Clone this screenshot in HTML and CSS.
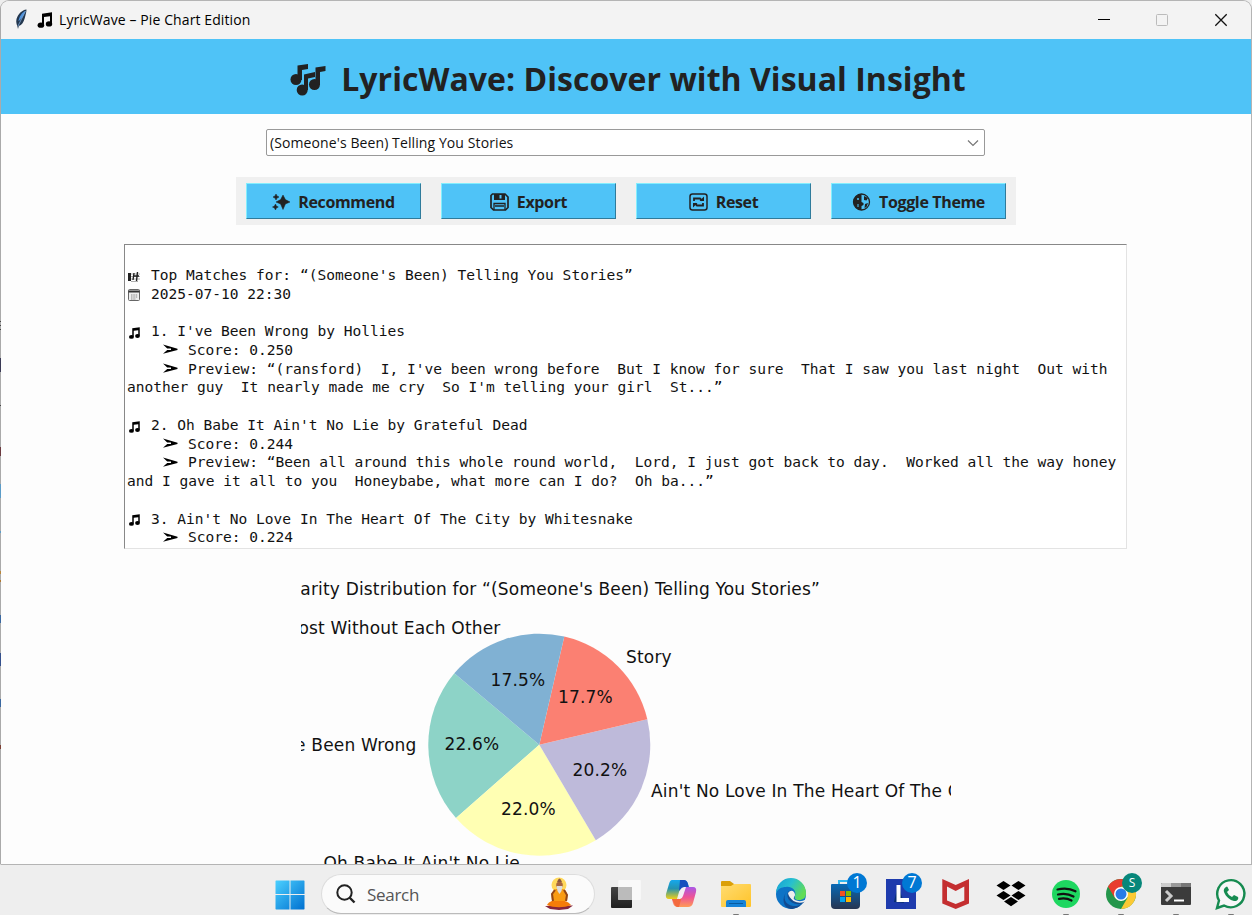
FILE: index.html
```html
<!DOCTYPE html>
<html lang="en">
<head>
<meta charset="utf-8">
<title>LyricWave – Pie Chart Edition</title>
<link rel="stylesheet" href="styles.css">
</head>
<body>
<svg class="defs" width="0" height="0">
  <defs>
    <symbol id="note" viewBox="0 0 16 16"><path d="M5 1.800 15 .2V11.500h-2V4.200L7 5.100v8H5z"/><ellipse cx="3.900" cy="13.200" rx="3.300" ry="2.600"/><ellipse cx="12" cy="11.900" rx="3.200" ry="2.600"/></symbol>
    <symbol id="arrow" viewBox="0 0 16 10"><path d="M1 .5 15.500 4.700v1.200L1 9.800 5.200 6.100H9V4.500H5.200z"/></symbol>
  </defs>
</svg>
<div class="window">
  <div class="titlebar">
    <svg class="feather" width="14" height="21" viewBox="0 0 14 21"><path d="M12.500.5C8 1 4 5 2.500 10c-.7 3 .2 5.500.8 7l.7 3 .8-3c3-1 5-4 6-8C11.500 6 12.500 3 12.500.5z" fill="#23374f"/><path d="M11.500 2C8 3 5 8 4.500 12 7 11 10 6 11.500 2z" fill="#4f94df"/><path d="M11.500 2 4 17" stroke="#7da7d6" stroke-width=".8"/></svg>
    <svg class="title-note" width="16" height="16"><use href="#note"/></svg>
    <span class="caption">LyricWave – Pie Chart Edition</span>
    <svg class="controls" width="140" height="20" viewBox="0 0 140 20" fill="none"><path d="M8 9.500h12" stroke="#000"/><rect x="66.500" y="4.500" width="11" height="11" rx="1" stroke="#bbb"/><path d="m125.300 4.300 11.400 11.400m0-11.400-11.400 11.400" stroke="#111" stroke-width="1.300"/></svg>
  </div>
  <header class="banner">
    <svg width="36" height="34" viewBox="0 0 36 34" fill="#222"><circle cx="6" cy="16.500" r="5.500"/><path d="M7.500 2.500 18 1v5l-6 1v10H7.500z"/><circle cx="12.200" cy="27" r="5.500"/><path d="M14 11.500 25 9v5l-7 1.500V27h-4z"/><circle cx="24.500" cy="21.500" r="5.500"/><path d="m25.500 4.500 10-1.500v5l-5.500 1v13h-4.500z"/></svg>
    <h1>LyricWave: Discover with Visual Insight</h1>
  </header>
  <div class="combo"><span>(Someone's Been) Telling You Stories</span><svg width="12" height="8" viewBox="0 0 12 8" fill="none" stroke="#777" stroke-width="1.200"><path d="m1 1.500 5 5 5-5"/></svg></div>
  <div class="actions">
    <button class="recommend"><svg width="18" height="18" viewBox="0 0 18 18" fill="#222"><path d="m11 2 2.400 4.600L18 9l-4.600 2L11 16.500 8.600 11 4 9l4.600-2.400zM4 1l1 2 2 1-2 1-1 2-1-2-2-1 2-1zM3.500 11l.8 2 2 1-2 1-.8 2-1-2-2-1 2-1z" stroke="#222" stroke-width=".5"/></svg><span>Recommend</span></button>
    <button class="export"><svg width="19" height="18" viewBox="0 0 19 18"><path d="M2.500 1h12.500l3 3v10.500L15.500 17h-12L1 14.500V2.500z" fill="none" stroke="#222" stroke-width="1.700"/><path d="M4 1h11v6H4z" fill="#222"/><path d="M9.500 2h2v3.500h-2z" fill="#4fc3f7"/><path d="M4 17v-6.500h11V17M5 13h9" fill="none" stroke="#222" stroke-width="1.300"/></svg><span>Export</span></button>
    <button class="reset"><svg width="19" height="18" viewBox="0 0 19 18" fill="none" stroke="#222"><rect x="1" y="1" width="17" height="16" rx="2.500" stroke-width="1.500"/><path d="M5 8V5.500h6l2 2M14 10v2.500H8l-2-2" stroke-width="1.800"/><path d="M10.500 8h4.500V3.500zM8.500 10H4v4.500z" fill="#222" stroke="none"/></svg><span>Reset</span></button>
    <button class="theme"><svg width="19" height="18" viewBox="0 0 19 18"><circle cx="9.500" cy="9" r="8" fill="none" stroke="#222" stroke-width="1.300"/><path d="M9.500 1a8 8 0 0 0 0 16v-4l2-1v-2l-2-1z" fill="#222"/><path d="m12 3 4 2-1.500 2.500L12 7zM13 11l3-1-1.500 4-2 1z" fill="#222"/><circle cx="6" cy="6" r="1" fill="#4fc3f7"/><path d="M6 11v3" stroke="#4fc3f7"/></svg><span>Toggle Theme</span></button>
  </div>
  <div class="results">
    <p class="line"></p>
    <p class="line"><svg class="ico" width="15" height="12" viewBox="0 0 15 12" stroke="#222"><path d="M2.500 2v8" stroke-width="3"/><path d="M4 3h9M4 5.500h9M4 8h9M4 10.500h7" stroke="#999" stroke-width=".8"/><path d="m7 2-1 7M10.500 1l-1 9M6 5h6" stroke-width="1.400"/></svg>Top Matches for: “(Someone's Been) Telling You Stories”</p>
    <p class="line"><svg class="ico" width="15" height="12" viewBox="0 0 15 12"><rect x="1.500" y=".5" width="11" height="11" rx="1" fill="#eee" stroke="#666"/><path d="M1.500 1.500h11v2h-11z" fill="#333"/><path d="M4 6h7M4 8h7M4 10h5" stroke="#888" stroke-dasharray="1.500 .8"/></svg>2025-07-10 22:30</p>
    <p class="line"></p>
    <p class="line"><svg class="ico" width="15" height="12"><use href="#note"/></svg>1. I've Been Wrong by Hollies</p>
    <p class="line detail"><svg class="arrow" width="16" height="10"><use href="#arrow"/></svg>Score: 0.250</p>
    <p class="line detail"><svg class="arrow" width="16" height="10"><use href="#arrow"/></svg>Preview: “(ransford)  I, I've been wrong before  But I know for sure  That I saw you last night  Out with</p>
    <p class="line">another guy  It nearly made me cry  So I'm telling your girl  St...”</p>
    <p class="line"></p>
    <p class="line"><svg class="ico" width="15" height="12"><use href="#note"/></svg>2. Oh Babe It Ain't No Lie by Grateful Dead</p>
    <p class="line detail"><svg class="arrow" width="16" height="10"><use href="#arrow"/></svg>Score: 0.244</p>
    <p class="line detail"><svg class="arrow" width="16" height="10"><use href="#arrow"/></svg>Preview: “Been all around this whole round world,  Lord, I just got back to day.  Worked all the way honey</p>
    <p class="line">and I gave it all to you  Honeybabe, what more can I do?  Oh ba...”</p>
    <p class="line"></p>
    <p class="line"><svg class="ico" width="15" height="12"><use href="#note"/></svg>3. Ain't No Love In The Heart Of The City by Whitesnake</p>
    <p class="line detail"><svg class="arrow" width="16" height="10"><use href="#arrow"/></svg>Score: 0.224</p>
  </div>
  <svg class="chart" width="650" height="295" viewBox="301 569 650 295">
    <path fill="#8dd3c7" d="M539.300 744.700 454.300 673.300A111 111 0 0 0 456 818.100z"/>
    <path fill="#ffffb3" d="M539.300 744.700 456 818.100A111 111 0 0 0 595.800 840.200z"/>
    <path fill="#bebada" d="M539.300 744.700 595.800 840.200A111 111 0 0 0 647.300 719.200z"/>
    <path fill="#fb8072" d="M539.300 744.700 647.300 719.200A111 111 0 0 0 564.300 636.500z"/>
    <path fill="#80b1d3" d="M539.300 744.700 564.300 636.500A111 111 0 0 0 454.300 673.300z"/>
    <text x="820" y="594.500" text-anchor="end">Similarity Distribution for “(Someone's Been) Telling You Stories”</text>
    <text x="500.500" y="633.500" text-anchor="end">Lost Without Each Other</text>
    <text x="626" y="662.500">Story</text>
    <text x="416.500" y="751" text-anchor="end">I've Been Wrong</text>
    <text x="651" y="797">Ain't No Love In The Heart Of The City</text>
    <text x="520" y="869" text-anchor="end">Oh Babe It Ain't No Lie</text>
    <g text-anchor="middle"><text x="518" y="686">17.5%</text><text x="585.500" y="702.500">17.7%</text><text x="472" y="750">22.6%</text><text x="600" y="776">20.2%</text><text x="528.500" y="815">22.0%</text></g>
  </svg>
</div>
<footer class="taskbar">
  <svg class="start" width="30" height="30" viewBox="0 0 30 30"><defs><linearGradient id="win" x2="1" y2="1"><stop stop-color="#4bd0ff"/><stop offset="1" stop-color="#0070d0"/></linearGradient></defs><path fill="url(#win)" d="M1 .5h13.500V14H.5V1zM15.500.5H29l.5.5v13h-14zM.5 15h14v14.500H1L.5 29zM15.500 15h14v14l-.5.500H15.500z"/></svg>
  <div class="search">
    <svg width="20" height="20" viewBox="0 0 20 20" fill="none" stroke="#222" stroke-width="2"><circle cx="8.500" cy="8.500" r="7.200"/><path d="m13.500 13.500 5 5" stroke-width="2.400"/></svg>
    <span>Search</span>
    <svg class="sage" width="30" height="34" viewBox="0 0 30 34"><circle cx="15" cy="8" r="7.500" fill="#ffd95c"/><path d="m1 29 28-.5-5 3.500-9 1-9-1z" fill="#86263b"/><path d="M3 28c2-4 7-5 11-5s10 1 13 5c-7 3-17 3-24 0z" fill="#f57c08"/><path d="M12 12c-4 1-5 6-4 12h15c1-6 0-11-4-12z" fill="#f99b13"/><path d="m11 13-3 4 1 7M20 13l3 5-1 6" fill="none" stroke="#934616" stroke-width="2"/><circle cx="15.500" cy="8" r="3.300" fill="#a76641"/><path d="M12.500 9h6l-1 5-2 3-2-3z" fill="#ddd"/><path d="M13 5q2.500-7 5 0z" fill="#8b5940"/></svg>
  </div>
  <div class="apps">
    <svg viewBox="0 0 55 50"><defs><linearGradient id="tv" x2="0" y2="1"><stop stop-color="#444"/><stop offset="1" stop-color="#202020"/></linearGradient></defs><rect x="13" y="22" width="21" height="21" rx="1" fill="url(#tv)"/><rect x="20.300" y="15" width="22.500" height="20" rx="1" fill="#f9f9f9"/><path d="M20.300 22H34v13H20.300z" fill="#bbb"/></svg>
    <svg viewBox="0 0 55 50"><defs><linearGradient id="ca" x2="0" y2="1"><stop stop-color="#15a8ee"/><stop offset=".45" stop-color="#2493b0"/><stop offset="1" stop-color="#f1cf17"/></linearGradient><linearGradient id="cb" x2="0" y2="1"><stop stop-color="#a957e7"/><stop offset=".5" stop-color="#ee5397"/><stop offset="1" stop-color="#ff9b55"/></linearGradient></defs><path d="M19 15h11q4 0 5 4l1 4h-6q-3 0-4 4l-2 7h-8q-4 0-3-5l3-10q1-4 3-4z" fill="url(#ca)"/><path d="M27 15h4q3 0 4 4l1 4h-6q-2 0-4 3z" fill="#1750be"/><path d="M32 22h8q4 0 3 5l-3 11q-1 4-5 4H25q-4 0-5-4l-1-4h6q3 0 4-4z" fill="url(#cb)"/><path d="M19 34h6q3 0 4-3l-3 11h-1q-3 0-4-4z" fill="#f36a3e"/><path d="m28.500 23-3 11h1.500q2 0 3-3l3-9h-2z" fill="#f5eff5"/></svg>
    <svg viewBox="0 0 55 50"><defs><linearGradient id="fd" x2="1" y2="1"><stop stop-color="#ffdc72"/><stop offset="1" stop-color="#ffc328"/></linearGradient></defs><path d="M13 17q0-1 1-1h8l4 3v6H13z" fill="#dba009"/><path d="M13 21h10l3-2h16q1 0 1 1v21q0 1-1 1H14q-1 0-1-1z" fill="url(#fd)"/><path d="M18 42v-5q0-2 2-2h16q2 0 2 2v5z" fill="#1683d8"/><path d="M21 38.500h14" stroke="#075ba0"/><path d="M25 50q0-1 1-1h4q1 0 1 1z" fill="#777"/></svg>
    <svg viewBox="0 0 55 50"><defs><linearGradient id="eg" x2="1" y2=".5"><stop stop-color="#159ed6"/><stop offset=".5" stop-color="#27bfd0"/><stop offset="1" stop-color="#62dc55"/></linearGradient></defs><circle cx="28" cy="29" r="15" fill="#0d73c6"/><path d="M13 28a15 15 0 0 1 30 0c0 5-3 7-7 7-4 0-5-2-4-4 2-6-4-10-9-9-5 0-8 2-10 6z" fill="url(#eg)"/><path d="M24 26c-5 6-2 14 6 15 5 .7 9-2 10-4-3 5-8 7-12 7-8-1-10-11-4-18z" fill="#124b91"/><path d="M25 27q4-3 6 1 1 3 0 6 3 4 11 2-3 4-8 3c-8-1-11-7-9-12z" fill="#124b91"/><path d="M25 28q3-4 6-1 2 3 0 5-1 2 1 3 5 2.500 11-.5l-1.500 2.500q-6 2-11-1-5-4-5.500-8z" fill="#eee"/></svg>
    <svg viewBox="0 0 55 50"><defs><linearGradient id="st" x2="0" y2="1"><stop stop-color="#0869b5"/><stop offset="1" stop-color="#273551"/></linearGradient></defs><path d="M21 21v-5h13v5" fill="none" stroke="#32b7ef" stroke-width="2"/><path d="M13 20q0-1 1-1h28v21q0 4-4 4H17q-4 0-4-4z" fill="url(#st)"/><path d="M22 26h5v5h-5z" fill="#f25022"/><path d="M28 26h5v5h-5z" fill="#7fba00"/><path d="M22 32h5v5h-5z" fill="#00a4ef"/><path d="M28 32h5v5h-5z" fill="#ffb900"/><circle cx="39" cy="18" r="10" fill="#0078d4"/><text x="39" y="23" class="badge">1</text></svg>
    <svg viewBox="0 0 55 50"><path d="M13 14h30v30H13z" fill="#1e3bad"/><path d="m25 20-4 17 10 1z" fill="#082f70"/><path d="M25.500 20v15H36" fill="none" stroke="#fff" stroke-width="4"/><circle cx="39" cy="18" r="10" fill="#0078d4"/><text x="39" y="23" class="badge">7</text></svg>
    <svg viewBox="0 0 55 50"><path fill="#c42e30" fill-rule="evenodd" d="m14.300 14 13.400 6L41 14v24.500L27.700 44l-13.400-5.500zM19 21.500v14l8.700 3.500 8.600-3.500v-14L27.700 26z"/></svg>
    <svg viewBox="0 0 55 50"><path d="m20.500 16 7 4.500-7 4.500-7-4.500zm15 0 7 4.500-7 4.500-7-4.500zm-15 10 7 4.500-7 4.500-7-4.500zm15 0 7 4.500-7 4.500-7-4.500zM28 32l7 4.500-7 4.700-7-4.700z"/></svg>
    <svg viewBox="0 0 55 50"><circle cx="28" cy="29" r="14" fill="#1ed760"/><path d="M19.500 24.500q10-2.500 18 1.800M20 29.500q8.500-2 15.500 2M21 33.800q7-1.500 12.500 1.700" fill="none" stroke="#111" stroke-width="2.200" stroke-linecap="round"/><path d="M25 50q0-1 1-1h4q1 0 1 1z" fill="#777"/></svg>
    <svg viewBox="0 0 55 50"><circle cx="28" cy="29" r="15" fill="#24964b"/><path d="M15 21.500A15 15 0 0 1 41 21.500H28l-6.500 11z" fill="#e83c2f"/><path d="M41 21.500A15 15 0 0 1 28 44l6.500-11.200L28 21.500z" fill="#fcc934"/><circle cx="28" cy="29" r="7" fill="#fff"/><circle cx="28" cy="29" r="5.500" fill="#287be8"/><circle cx="39" cy="18" r="10" fill="#07877a"/><text x="39" y="22" class="badge small">S</text><path d="M25 50q0-1 1-1h4q1 0 1 1z" fill="#777"/></svg>
    <svg viewBox="0 0 55 50"><rect x="13" y="18" width="30" height="22" rx="1" fill="#3b3b3b"/><path d="M13 22v-3q0-1 1-1h9v4z" fill="#ccc"/><path d="M23 18h10v4H23z" fill="#999"/><path d="M33 18h9q1 0 1 1v3H33z" fill="#777"/><path d="m18 26 5 5-5 5" fill="none" stroke="#ccc" stroke-width="3"/><path d="M26 35.500h10" stroke="#fff" stroke-width="2"/><path d="M25 50q0-1 1-1h4q1 0 1 1z" fill="#777"/></svg>
    <svg viewBox="0 0 55 50"><path d="m14 43 2-7.500a13.600 13.600 0 1 1 5 5z" fill="#f7f7f7" stroke="#168b50" stroke-width="2.400"/><path d="M23 22q-3 2-2 5c2 5 6 8 10 9 3 .7 5-2 4-4l-4-2-2 2q-4-2-5-5l2-2-1.500-3q-.5-1-1.500 0z" fill="#168b50"/><path d="M25 50q0-1 1-1h4q1 0 1 1z" fill="#777"/></svg>
  </div>
</footer>
</body>
</html>
```
FILE: styles.css
```css
* { box-sizing: border-box; }
body { margin: 0; width: 1252px; height: 915px; overflow: hidden; background: #eee; font-family: "Open Sans", "Noto Sans", sans-serif; }
.defs { display: block; }
.window {
  display: flex; flex-direction: column; align-items: center; height: 865px; overflow: hidden;
  border: 1px solid #b4b4b4; border-left-color: transparent; border-radius: 9px 9px 0 0;
  /* slivers of the desktop behind the window show along its left edge */
  background: linear-gradient(#fdfdfd, #fdfdfd) padding-box,
    linear-gradient(#aaa 0 321px, #444 321px 322px, #aaa 322px 325px, #444 325px 326px, #aaa 326px 329px, #444 329px 330px, #aaa 330px 358px, #3a3a55 358px 372px, #aaa 372px 405px, #444 405px 406px, #aaa 406px 447px, #6b3a3f 447px 456px, #aaa 456px 484px, #5b9cc8 484px 498px, #aaa 498px 531px, #5b9cc8 531px 533px, #aaa 533px 571px, #b8863c 571px 574px, #aaa 574px 580px, #b07830 580px 582px, #aaa 582px 615px, #3a68a0 615px 623px, #aaa 623px 653px, #34508c 653px 666px, #aaa 666px 699px, #3a68a0 699px 707px, #aaa 707px 745px, #7d4034 745px 749px, #aaa 749px) border-box;
}
.titlebar { display: flex; align-items: center; flex: none; align-self: stretch; height: 38px; padding-left: 13px; background: #f3f3f3; }
.feather { margin-top: -1px; }
.title-note { margin-left: 9px; }
.caption { margin-left: 6px; margin-top: -2px; font-size: 14px; letter-spacing: .1px; white-space: nowrap; }
.controls { margin-left: auto; margin-right: 21px; }
.banner { display: flex; align-items: center; justify-content: center; flex: none; align-self: stretch; height: 75px; padding: 6px 0 0 4px; gap: 15px; background: #4fc3f7; color: #222; }
h1 { margin: -2px 0 0; font-size: 32px; font-weight: 700; line-height: 44px; letter-spacing: .04px; white-space: nowrap; }
.combo { display: flex; align-items: center; justify-content: space-between; flex: none; width: 719px; height: 27px; margin: 15px 1px 0 0; padding: 0 5px 0 3px; border: 1px solid #999; border-radius: 2px; background: #fff; color: #111; font-size: 14px; letter-spacing: .1px; }
.actions { display: flex; flex: none; gap: 20px; width: 780px; height: 48px; margin-top: 21px; padding: 6px 10px; background: #f0f0f0; }
button { display: flex; align-items: center; justify-content: center; gap: 8px; width: 175px; height: 36px; padding: 2px 0 0; border: 1px solid; border-color: #83eefe #2f7b9b #2f7b9b #83eefe; background: #4fc3f7; color: #222; font: 700 16px "Open Sans", sans-serif; letter-spacing: -.35px; }
.results { flex: none; width: 1003px; height: 305px; margin: 19px 1px 0 0; padding: 2px 2px 0; overflow: hidden; border: 1px solid; border-color: #888 #e3e3e3 #e3e3e3 #888; background: #fff; color: #111; font: 14.550px/18.750px "DejaVu Sans Mono", monospace; }
.line { display: flex; align-items: center; height: 18.750px; margin: 0; white-space: pre; }
.ico { flex: none; margin-right: 9px; margin-top: 3px; }
.detail { padding-left: 35px; }
.arrow { flex: none; margin-right: 10px; margin-top: -2px; }
.chart { flex: none; margin-top: 20px; }
.chart text { font: 17px "DejaVu Sans", sans-serif; letter-spacing: .18px; fill: #111; }
.taskbar { display: flex; align-items: center; height: 50px; padding-left: 275px; background: #eee; }
.start { margin-top: 9px; }
.search { display: flex; align-items: center; width: 274px; height: 40px; margin: 8px 3px 0 16px; padding: 0 20px 0 14px; border: 1px solid #ddd; border-bottom-color: #bbb; border-radius: 20px; background: #fbfbfb; color: #555; font-size: 17px; letter-spacing: -.3px; }
.search span { margin-left: 11px; }
.sage { margin-left: auto; }
.apps { display: flex; flex: 1; height: 50px; overflow: hidden; }
.apps svg { flex: none; width: 55px; height: 50px; }
.badge { font: 16px "Open Sans", sans-serif; fill: #fff; text-anchor: middle; }
.badge.small { font-size: 12px; }
```
